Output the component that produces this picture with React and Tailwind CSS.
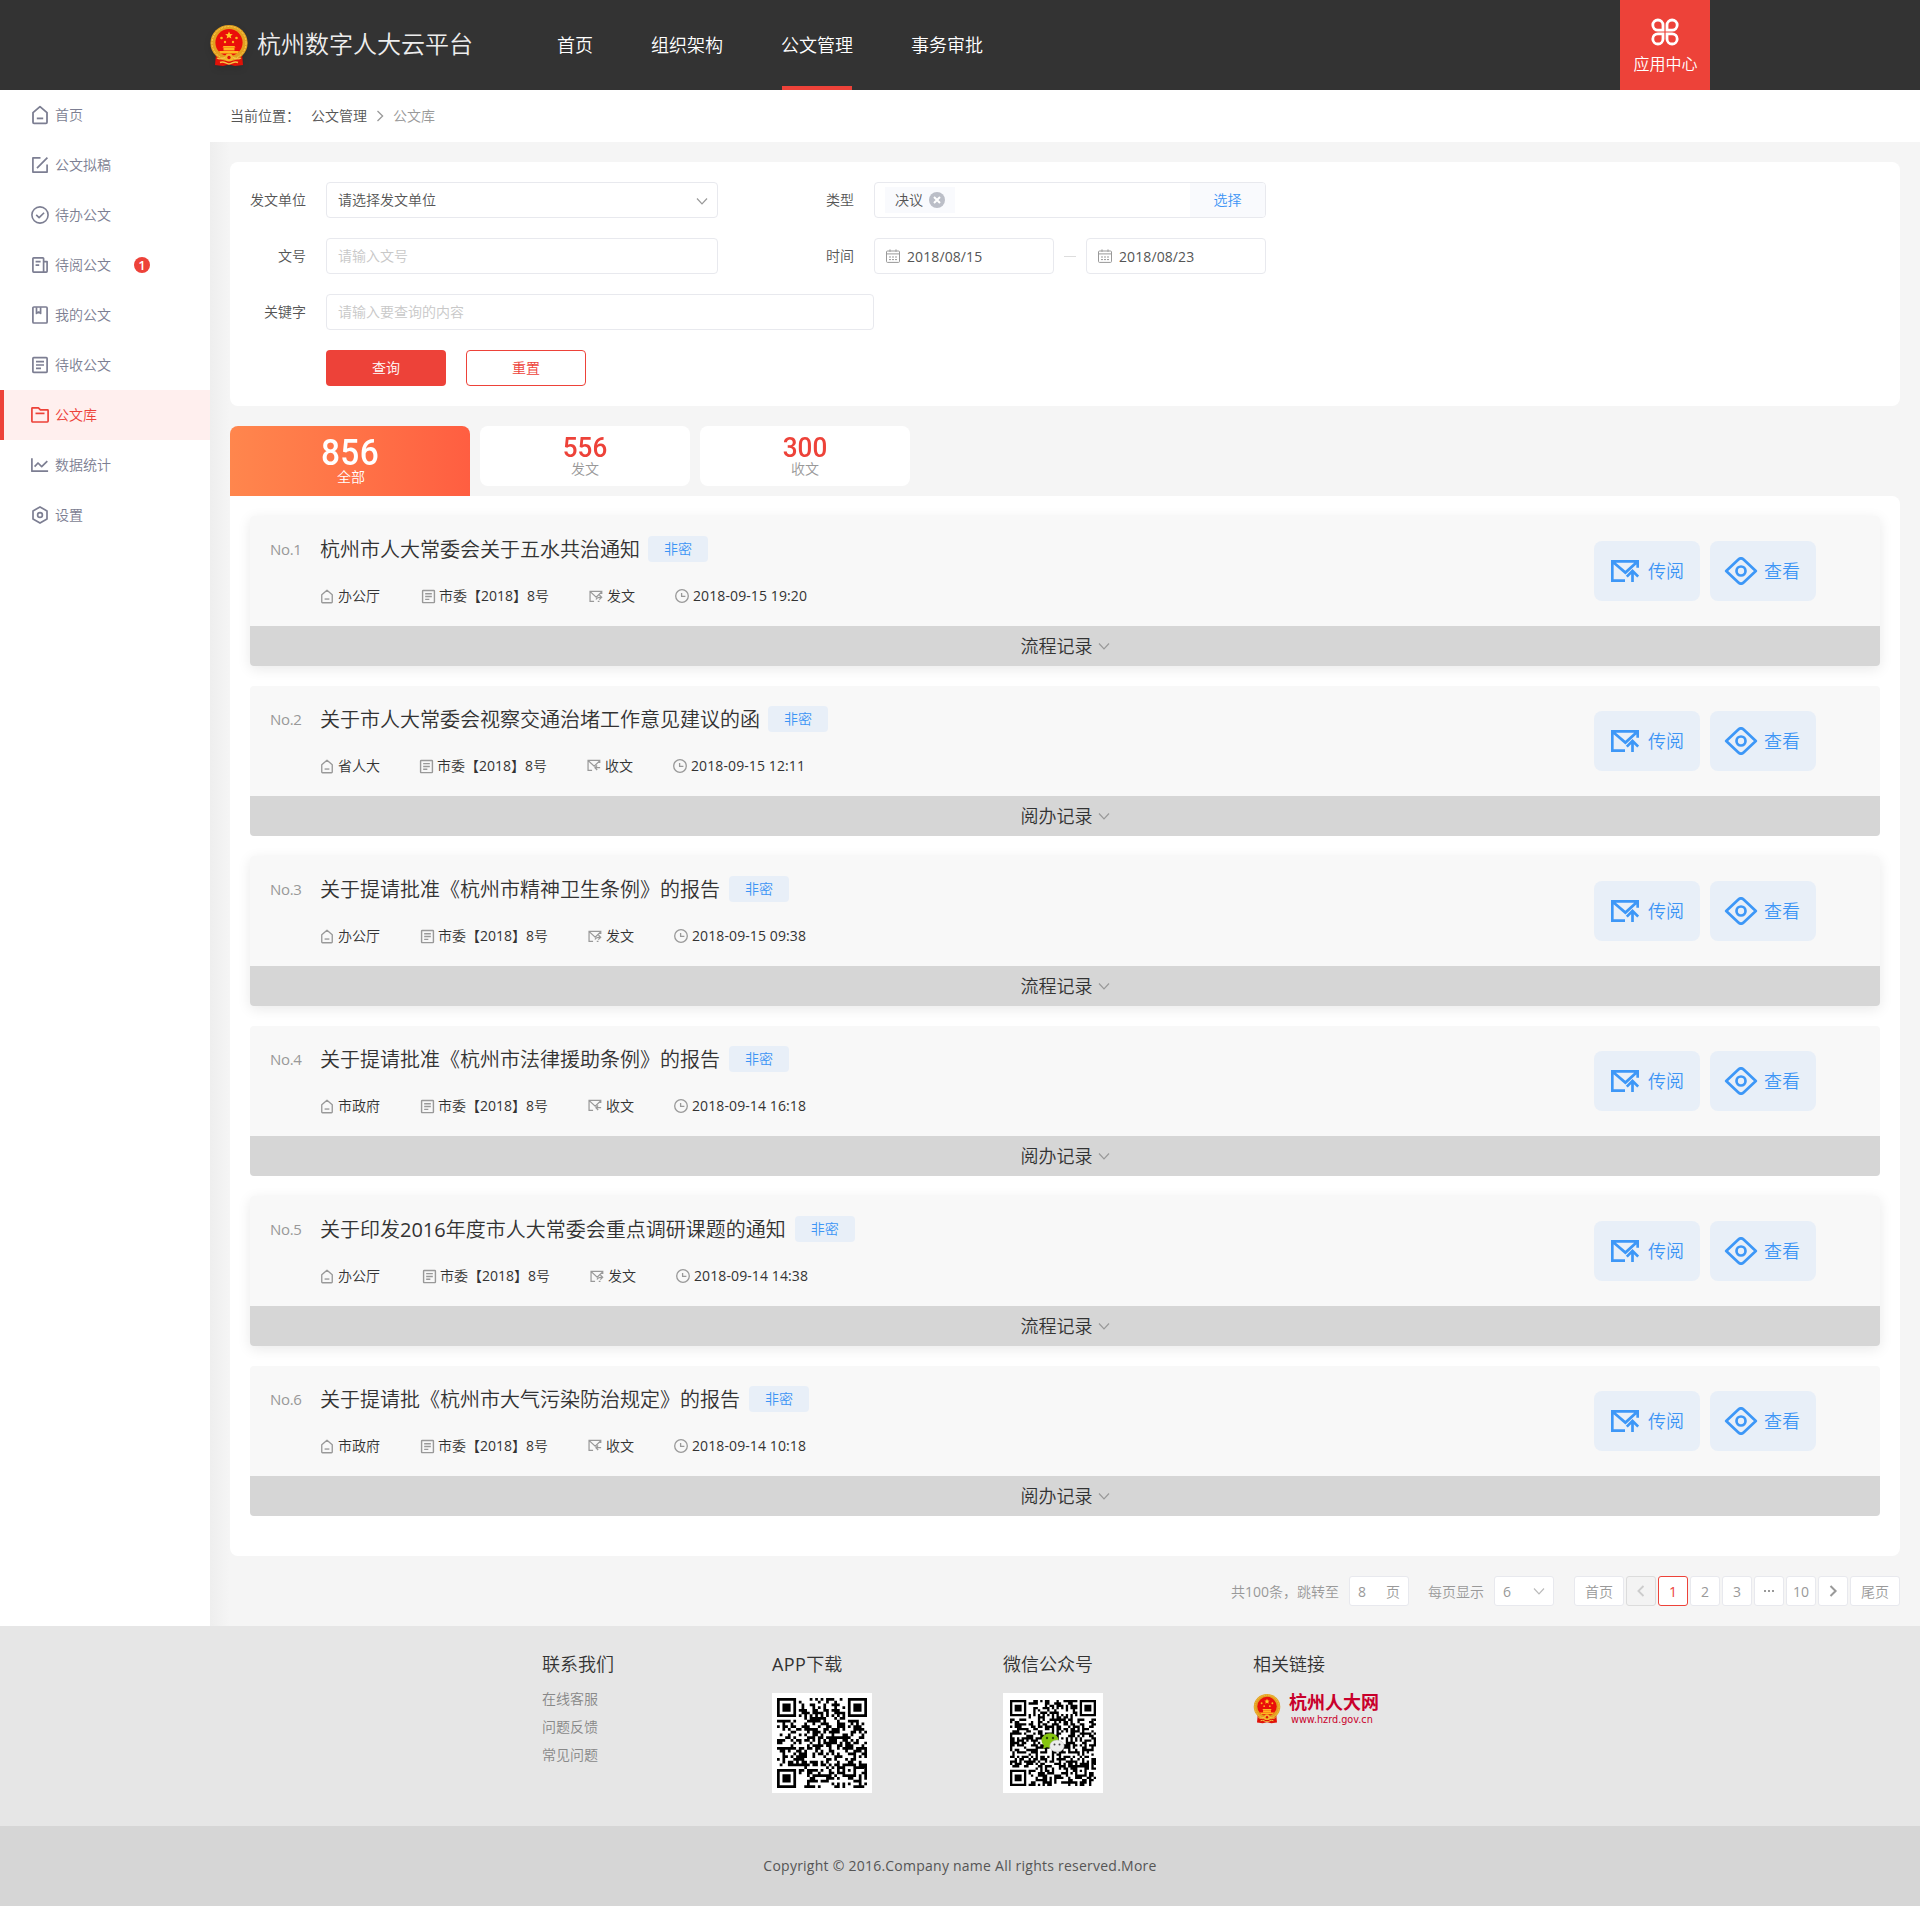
import React from "react";

const stroke = { fill: "none", stroke: "currentColor", strokeLinejoin: "round" };

function HomeIcon({ className, w = 1.8 }) {
  return (
    <svg viewBox="0 0 18 20" className={className} {...stroke} strokeWidth={w}>
      <path d="M2 7.6 9 1.6l7 6V17.300a1 1 0 0 1-1 1H3a1 1 0 0 1-1-1z" />
      <path d="M5.8 13.4h6.4" />
    </svg>
  );
}
function DraftIcon({ className }) {
  return (
    <svg viewBox="0 0 18 18" className={className} {...stroke} strokeWidth="1.7">
      <path d="M9.5 1.9H1.9v14.2h14.2V8.5M6 12.2 16.4 1.6" />
    </svg>
  );
}
function TodoIcon({ className }) {
  return (
    <svg viewBox="0 0 18 18" className={className} {...stroke} strokeWidth="1.6">
      <circle cx="9" cy="9" r="8.1" />
      <path d="m5.2 8.8 2.9 2.8 5-4.9" />
    </svg>
  );
}
function ReadIcon({ className }) {
  return (
    <svg viewBox="0 0 18 18" className={className} {...stroke} strokeWidth="1.7">
      <path d="M12.6 16.1V2.6a.8.8 0 0 0-.8-.8H2.7a.8.8 0 0 0-.8.8v12.7c0 .4.4.8.8.8h12.6c.4 0 .8-.4.8-.8V5.6h-3.3" />
      <path d="M4.6 5.7h5M4.6 9.2h3.6" />
    </svg>
  );
}
function BookIcon({ className }) {
  return (
    <svg viewBox="0 0 18 18" className={className} {...stroke} strokeWidth="1.7">
      <rect x="1.9" y="1" width="14.2" height="16" rx="1" />
      <path d="M5.5 1.2v6.2L7.6 6l2 1.4V1.2" />
    </svg>
  );
}
function ListIcon({ className, w = 1.7 }) {
  return (
    <svg viewBox="0 0 18 18" className={className} {...stroke} strokeWidth={w}>
      <rect x="1.9" y="1.7" width="14.2" height="14.6" rx="0.8" />
      <path d="M5 5.6h8M5 9h8M5 12.4h5" />
    </svg>
  );
}
function FolderIcon({ className }) {
  return (
    <svg viewBox="0 0 18 18" className={className} {...stroke} strokeWidth="1.7">
      <path d="M.9 15.1V2.4c0-.3.2-.5.5-.5h6l2 2h7.2c.3 0 .5.2.5.5v10.7c0 .5-.3.9-.8.9H1.7c-.5 0-.8-.4-.8-.9z" />
      <path d="M4.5 7.4h9" />
    </svg>
  );
}
function ChartIcon({ className }) {
  return (
    <svg viewBox="0 0 18 18" className={className} {...stroke} strokeWidth="1.7">
      <path d="M.9 2.2v13h16.2M3.6 10.6 7 7l3.7 3.6 5.6-5.4" />
    </svg>
  );
}
function GearIcon({ className }) {
  return (
    <svg viewBox="0 0 18 18" className={className} {...stroke} strokeWidth="1.7">
      <path d="m9 .9 7 4v8.2l-7 4-7-4V4.9z" />
      <circle cx="9" cy="9" r="2.4" />
    </svg>
  );
}
function MailIcon({ className, incoming }) {
  return (
    <svg viewBox="0 0 16 14" className={className} {...stroke} strokeWidth="1.4" strokeLinejoin="miter">
      <path d="M14.6 4.2V1.2H1.2v11.3h4.6M1.4 1.4l6.8 6.4 6.2-6" />
      {incoming ? <path d="M15 9.5H9.4M11.6 7 9.1 9.5l2.5 2.6" /> : <path d="M8 10.4c1-2 3-2.6 6.2-2.6M11.8 5.2l2.7 2.6-2.7 2.7M10 12.6h2" />}
    </svg>
  );
}
function ClockIcon({ className }) {
  return (
    <svg viewBox="0 0 14 14" className={className} {...stroke} strokeWidth="1.3">
      <circle cx="7" cy="7" r="6.3" />
      <path d="M6.6 4v3.4h3.8" />
    </svg>
  );
}
function SendIcon() {
  return (
    <svg viewBox="0 0 28 22" className="h-[22px] w-7 text-[#3d97f7]" fill="none" stroke="currentColor" strokeWidth="2.7">
      <path d="M14 20.7H1.3V1.3h25.4v6.4M2 2l12.4 10.6L26 2" />
      <path d="M21.5 22V11.2M15.8 16.6l5.700-5.600 5.700 5.600" />
    </svg>
  );
}
function EyeIcon() {
  return (
    <svg viewBox="0 0 34 28" className="h-7 w-[34px] text-[#3d97f7]" {...stroke} strokeWidth="2.7">
      <path d="M2.2 14 14.4 2.5c1.5-1.4 3.7-1.4 5.2 0L31.8 14 19.6 25.5c-1.5 1.4-3.700 1.4-5.200 0z" />
      <circle cx="17" cy="14" r="4.5" />
    </svg>
  );
}
function Chevron({ className, dir = "down", w = 1.2 }) {
  const d = { down: "M1 3.5 6 8.8l5-5.3", right: "M3.5 1 8.6 6l-5.1 5", left: "M8.5 1 3.4 6l5.1 5" }[dir];
  return (
    <svg viewBox="0 0 12 12" className={className} fill="none" stroke="currentColor" strokeWidth={w}>
      <path d={d} />
    </svg>
  );
}
function CalendarIcon() {
  return (
    <svg viewBox="0 0 14 14" className="h-3.5 w-3.5 text-[#999]" fill="none" stroke="currentColor">
      <rect x=".5" y="2" width="13" height="11.4" rx="1" />
      <path d="M.5 4.9h13M4 .4v2.4M10 .4v2.4" />
      <path d="M3 8h8.4M3 10.6h8.4" strokeDasharray="2 1" />
    </svg>
  );
}
function AppsIcon() {
  return (
    <svg viewBox="0 0 28 28" className="h-7 w-7 text-white" fill="none" stroke="currentColor" strokeWidth="2.8">
      <path d="M12 12.2H6.9A5.1 5.1 0 1 1 12 7.100z" />
      <path d="M16 12.2h5.1A5.1 5.1 0 1 0 16 7.100z" />
      <path d="M12 15.8H6.9A5.1 5.1 0 1 0 12 20.900z" />
      <path d="M16 15.8h5.1A5.1 5.1 0 1 1 16 20.900z" />
    </svg>
  );
}
function Emblem({ className }) {
  return (
    <svg viewBox="0 0 38 42" className={className}>
      <path d="M6 29h26l1 11-8 1-6-1.500-6 1.500-8-1z" fill="#e01208" />
      <ellipse cx="19" cy="18" rx="18.600" ry="18" fill="#e3a020" />
      <ellipse cx="19" cy="18" rx="17" ry="16.500" fill="none" stroke="#f7cf52" strokeWidth="1" strokeDasharray="2 1.200" />
      <circle cx="19" cy="17.500" r="13.600" fill="#ea0f0a" />
      <path d="m19 6.600 1.100 2.500 2.700.2-2.100 1.700.7 2.600-2.400-1.400-2.400 1.400.7-2.600-2.100-1.700 2.700-.2z" fill="#ffc928" />
      <g fill="#ffb61f">
        <circle cx="11.500" cy="13" r="1.300" />
        <circle cx="26.500" cy="13" r="1.300" />
        <circle cx="15" cy="17" r="1.200" />
        <circle cx="23" cy="17" r="1.200" />
        <path d="M13.500 21h11l1 1.500h-13zM13.500 22.800h11v2.700h-11zM9 26h20l-1.500 2.500h-17z" />
      </g>
      <circle cx="19" cy="32.500" r="4" fill="#f3b62a" />
      <circle cx="19" cy="32.500" r="1.700" fill="#e01208" />
      <path d="M7 33c3 2 5 .5 8-.5M31 33c-3 2-5 .5-8-.5M10 37.500c4-2 6 1.500 9 1.500s5-3.500 9-1.500" fill="none" stroke="#f6c445" strokeWidth="1.400" />
    </svg>
  );
}

function inFinder(x, y, n) {
  return (x < 8 && y < 8) || (x >= n - 8 && y < 8) || (x < 8 && y >= n - 8);
}
function QrCode({ n, seed, className }) {
  let s = seed;
  let d = "";
  const a = n - 7;
  for (let y = 0; y < n; y++) {
    for (let x = 0; x < n; x++) {
      s = (s * 1103515245 + 12345) % 2147483648;
      if (inFinder(x, y, n)) continue;
      const r = Math.max(Math.abs(x - a), Math.abs(y - a));
      const on = r <= 2 ? r !== 1 : x === 6 || y === 6 ? (x + y) % 2 === 0 : (s >> 16) % 100 < 52;
      if (on) d += `M${x} ${y}h1v1h-1z`;
    }
  }
  [[0, 0], [n - 7, 0], [0, n - 7]].forEach(([x, y]) => {
    d += `M${x} ${y}h7v7h-7zM${x + 1} ${y + 1}v5h5v-5zM${x + 2} ${y + 2}h3v3h-3z`;
  });
  return (
    <svg viewBox={`0 0 ${n} ${n}`} className={className}>
      <path d={d} fill="#000" />
    </svg>
  );
}
function WeChat() {
  return (
    <svg viewBox="0 0 24 20" className="absolute left-[38px] top-10 h-5 w-6">
      <ellipse cx="9" cy="7.500" rx="8.500" ry="7.300" fill="#86c610" />
      <path d="m3 12-1 4 4-2z" fill="#86c610" />
      <circle cx="6" cy="5" r="1.200" fill="#2c4a05" />
      <circle cx="12" cy="5" r="1.200" fill="#2c4a05" />
      <ellipse cx="16" cy="13" rx="7.200" ry="6" fill="#ececec" stroke="#bbb" strokeWidth=".5" />
      <circle cx="13.500" cy="11.500" r="1" fill="#444" />
      <circle cx="18.500" cy="11.500" r="1" fill="#444" />
    </svg>
  );
}

const menu = [
  ["首页", HomeIcon],
  ["公文拟稿", DraftIcon],
  ["待办公文", TodoIcon],
  ["待阅公文", ReadIcon],
  ["我的公文", BookIcon],
  ["待收公文", ListIcon],
  ["公文库", FolderIcon],
  ["数据统计", ChartIcon],
  ["设置", GearIcon],
];

const docs = [
  { title: "杭州市人大常委会关于五水共治通知", org: "办公厅", time: "2018-09-15 19:20", gap: "w-[101px]" },
  { title: "关于市人大常委会视察交通治堵工作意见建议的函", org: "省人大", time: "2018-09-15 12:11", gap: "w-[99px]" },
  { title: "关于提请批准《杭州市精神卫生条例》的报告", org: "办公厅", time: "2018-09-15 09:38", gap: "w-[100px]" },
  { title: "关于提请批准《杭州市法律援助条例》的报告", org: "市政府", time: "2018-09-14 16:18", gap: "w-[100px]" },
  { title: "关于印发2016年度市人大常委会重点调研课题的通知", org: "办公厅", time: "2018-09-14 14:38", gap: "w-[102px]" },
  { title: "关于提请批《杭州市大气污染防治规定》的报告", org: "市政府", time: "2018-09-14 10:18", gap: "w-[100px]" },
];

// Small labels sit one pixel above the optical centre of their row.
function T({ children, className = "" }) {
  return <span className={`-mt-0.5 ${className}`}>{children}</span>;
}

// Digits inside a string are set in the regular weight, the Chinese text stays lighter.
function Mixed({ text }) {
  return text.split(/(\d+)/).map((part, i) =>
    i % 2 ? (
      <span key={i} className="font-normal">
        {part}
      </span>
    ) : (
      part
    )
  );
}

function Header() {
  return (
    <header className="flex h-[90px] bg-[#333] text-white">
      <div className="ml-[210px] flex w-[347px] items-center">
        <Emblem className="mt-0.5 h-[42px] w-[38px] drop-shadow-md" />
        <span className="-mt-0.5 ml-[9px] text-[24px] leading-none text-[#eee]">杭州数字人大云平台</span>
      </div>
      <nav className="flex gap-[58px] text-[18px]">
        {["首页", "组织架构", "公文管理", "事务审批"].map((t) => (
          <a key={t} className="flex h-[90px] flex-col items-center">
            <span className="flex flex-1 items-center">{t}</span>
            {t === "公文管理" && <span className="-mt-1 h-1 w-[70px] bg-[#ed4239]" />}
          </a>
        ))}
      </nav>
      <div className="ml-auto mr-[210px] flex w-[90px] flex-col items-center bg-[#ed4239] pt-[18px]">
        <AppsIcon />
        <span className="ml-px mt-[10px] text-[16px] leading-none">应用中心</span>
      </div>
    </header>
  );
}

function Sidebar() {
  return (
    <aside className="w-[210px] shrink-0 bg-white text-[14px] text-[#7c7e92]">
      {menu.map(([label, Icon]) => (
        <a
          key={label}
          className={
            label === "公文库"
              ? "flex h-[50px] items-center border-l-4 border-[#ed4239] bg-[#ffefee] pl-[27px] text-[#ed4239]"
              : "flex h-[50px] items-center pl-[31px]"
          }
        >
          <Icon className={label === "首页" ? "h-5 w-[18px]" : "h-[18px] w-[18px]"} />
          <T className="ml-[6px]">{label}</T>
          {label === "待阅公文" && (
            <span className="ml-[23px] flex h-4 w-4 items-center justify-center rounded-full bg-[#ed4239] text-[13px] font-semibold leading-none text-white">
              1
            </span>
          )}
        </a>
      ))}
    </aside>
  );
}

const field = "flex h-9 items-center rounded border border-[#e8e9ee] bg-white";

function SearchForm() {
  return (
    <section className="mt-5 flex h-[244px] flex-col gap-5 rounded-lg bg-white py-5 text-[14px] text-[#555]">
      <div className="flex items-center">
        <T className="w-[76px] text-right">发文单位</T>
        <div className={`${field} ml-5 w-[392px] justify-between pl-[11px] pr-[9px]`}>
          <T>请选择发文单位</T>
          <Chevron className="mt-0.5 h-3 w-3 text-[#999]" />
        </div>
        <T className="w-[136px] text-right">类型</T>
        <div className={`${field} ml-5 w-[392px] justify-between overflow-hidden pl-[10px]`}>
          <span className="flex h-[26px] w-[70px] items-center gap-1.5 bg-[#f9fafd] pl-[10px]">
            <T>决议</T>
            <svg viewBox="0 0 16 16" className="h-4 w-4">
              <circle cx="8" cy="8" r="8" fill="#bbbec7" />
              <path d="m5 5 6 6M11 5l-6 6" stroke="#fff" strokeWidth="2" />
            </svg>
          </span>
          <span className="flex h-full w-[75px] items-center justify-center bg-[#f9fafd] text-[#3d95f5]">
            <T>选择</T>
          </span>
        </div>
      </div>
      <div className="flex items-center">
        <T className="w-[76px] text-right">文号</T>
        <div className={`${field} ml-5 w-[392px] pl-[11px] text-[#c8c8c8]`}>
          <T>请输入文号</T>
        </div>
        <T className="w-[136px] text-right">时间</T>
        <div className={`${field} ml-5 w-[180px] gap-[7px] pl-[11px] font-normal tracking-[0.1px]`}>
          <CalendarIcon />
          2018/08/15
        </div>
        <span className="mx-[10px] h-px w-3 bg-[#ddd]" />
        <div className={`${field} w-[180px] gap-[7px] pl-[11px] font-normal tracking-[0.1px]`}>
          <CalendarIcon />
          2018/08/23
        </div>
      </div>
      <div className="flex items-center">
        <T className="w-[76px] text-right">关键字</T>
        <div className={`${field} ml-5 w-[548px] pl-[11px] text-[#c8c8c8]`}>
          <T>请输入要查询的内容</T>
        </div>
      </div>
      <div className="ml-24 flex gap-5">
        <button className="h-9 w-[120px] rounded bg-[#ed4239] pb-0.5 text-white">查询</button>
        <button className="h-9 w-[120px] rounded border border-[#ed4239] pb-0.5 text-[#ed4239]">重置</button>
      </div>
    </section>
  );
}

function Tabs() {
  return (
    <div className="mt-5 flex h-[70px] gap-[10px] text-center text-[14px] leading-none">
      <div className="w-[240px] rounded-t-lg bg-gradient-to-r from-[#ff864d] to-[#ff5e41] pt-[9px] text-white">
        <div className="scale-x-[0.93] font-[Roboto] text-[36px] font-medium tracking-[0.4px]">856</div>
        <div className="-mt-px pl-0.5">全部</div>
      </div>
      {[["556", "发文"], ["300", "收文"]].map(([n, t]) => (
        <div key={t} className="h-[60px] w-[210px] rounded-lg bg-white pt-2 text-[#999]">
          <div className="scale-x-[0.93] font-[Roboto] text-[28px] font-medium text-[#ed4239]">{n}</div>
          <div>{t}</div>
        </div>
      ))}
    </div>
  );
}

function DocCard({ doc, index }) {
  const odd = index % 2 === 0;
  return (
    <article className={odd ? "rounded shadow-[0_3px_14px_rgba(0,0,0,0.09)]" : "rounded"}>
      <div className="flex h-[110px] items-center rounded-t bg-[#f8f8f8] pl-5 pr-16">
        <div className="flex-1 self-start pt-5">
          <div className="flex h-[26px] items-center">
            <span className="w-[50px] text-[15px] font-normal tracking-[-0.3px] text-[#999]">No.{index + 1}</span>
            <h3 className="mt-0.5 whitespace-nowrap text-[20px] text-[#333]">
              <Mixed text={doc.title} />
            </h3>
            <span
              className={
                index < 2
                  ? "ml-2 flex h-[26px] w-[60px] items-center justify-center rounded bg-[#e8eff8] text-[14px] text-[#3d95f5]"
                  : "ml-[9px] flex h-[26px] w-[60px] items-center justify-center rounded bg-[#e8eff8] text-[14px] text-[#3d95f5]"
              }
            >
              <T>非密</T>
            </span>
          </div>
          <div className="ml-[50px] mt-[23px] flex h-[22px] items-center whitespace-nowrap text-[14px] text-[#333]">
            <span className={`${doc.gap} flex items-center gap-1`}>
              <HomeIcon className="h-[15px] w-3.5 text-[#999]" w={1.8} />
              <T>{doc.org}</T>
            </span>
            <span className="flex w-[168px] items-center gap-[3px]">
              <ListIcon className="h-[15px] w-[15px] text-[#999]" w={1.7} />
              <T>
                <Mixed text="市委【2018】8号" />
              </T>
            </span>
            <span className="flex w-[86px] items-center gap-1">
              <MailIcon className={odd ? "h-[13px] w-3.5 text-[#999]" : "-mt-0.5 h-[13px] w-3.5 text-[#999]"} incoming={!odd} />
              <T>{odd ? "发文" : "收文"}</T>
            </span>
            <span className="flex items-center gap-1 font-normal tracking-[0.1px]">
              <ClockIcon className="h-3.5 w-3.5 text-[#999]" />
              <T>{doc.time}</T>
            </span>
          </div>
        </div>
        <div className="flex gap-[10px] text-[18px] text-[#3d95f5]">
          <button className="flex h-[60px] w-[106px] items-center gap-[9px] rounded-lg bg-[#e8eff8] pl-[17px]">
            <SendIcon />
            传阅
          </button>
          <button className="flex h-[60px] w-[106px] items-center gap-[6px] rounded-lg bg-[#e8eff8] pl-[14px]">
            <EyeIcon />
            查看
          </button>
        </div>
      </div>
      <div className="flex h-10 items-center justify-center gap-[5px] rounded-b bg-[#d6d6d6] text-[18px] text-[#333]">
        {odd ? "流程记录" : "阅办记录"}
        <Chevron className="h-3 w-3 text-[#999]" />
      </div>
    </article>
  );
}

const pageBox = "flex h-[30px] items-center rounded-[3px] border bg-white";

function Pagination() {
  return (
    <div className="flex h-[70px] items-center justify-end text-[14px] text-[#999]">
      <span>
        <Mixed text="共100条，跳转至" />
      </span>
      <span className={`${pageBox} ml-[10px] w-[60px] justify-between border-[#e8e9ee] px-2`}>
        <span className="font-normal">8</span>
        <span>页</span>
      </span>
      <span className="ml-[19px]">每页显示</span>
      <span className={`${pageBox} ml-[10px] w-[60px] justify-between border-[#e8e9ee] px-2`}>
        <span className="font-normal">6</span>
        <Chevron className="h-3 w-3 text-[#bbb]" />
      </span>
      <div className="ml-5 flex gap-0.5">
        <span className={`${pageBox} w-[50px] justify-center border-[#e8e9ee]`}>首页</span>
        <span className="flex h-[30px] w-[30px] items-center justify-center rounded-[3px] border border-[#dcdcdc] bg-[#f3f3f3]">
          <Chevron dir="left" w={1.8} className="h-3 w-3 text-[#ccc]" />
        </span>
        <span className={`${pageBox} w-[30px] justify-center border-[#ed4239] font-normal text-[#ed4239]`}>1</span>
        <span className={`${pageBox} w-[30px] justify-center border-[#e8e9ee] font-normal`}>2</span>
        <span className={`${pageBox} w-[30px] justify-center border-[#e8e9ee] font-normal`}>3</span>
        <span className={`${pageBox} w-[30px] justify-center gap-0.5 border-[#e8e9ee]`}>
          <i className="h-0.5 w-0.5 bg-[#999]" />
          <i className="h-0.5 w-0.5 bg-[#999]" />
          <i className="h-0.5 w-0.5 bg-[#999]" />
        </span>
        <span className={`${pageBox} w-[30px] justify-center border-[#e8e9ee] font-normal`}>10</span>
        <span className={`${pageBox} w-[30px] justify-center border-[#e8e9ee]`}>
          <Chevron dir="right" w={2} className="h-3 w-3 text-[#999]" />
        </span>
        <span className={`${pageBox} w-[50px] justify-center border-[#e8e9ee]`}>尾页</span>
      </div>
    </div>
  );
}

function Footer() {
  return (
    <footer>
      <div className="flex h-[200px] bg-[#e6e6e6] pl-[542px] pt-[25px] text-[18px] text-[#333]">
        <div className="w-[230px]">
          <h4 className="leading-[27px]">联系我们</h4>
          <ul className="mt-[7px] text-[14px] leading-7 text-[#888]">
            <li>在线客服</li>
            <li>问题反馈</li>
            <li>常见问题</li>
          </ul>
        </div>
        <div className="w-[231px]">
          <h4 className="leading-[27px]">
            <span className="font-normal tracking-[0.4px]">APP</span>下载
          </h4>
          <div className="mt-[15px] h-[100px] w-[100px] bg-white p-[5px]">
            <QrCode n={33} seed={77} className="h-[90px] w-[90px]" />
          </div>
        </div>
        <div className="w-[250px]">
          <h4 className="leading-[27px]">微信公众号</h4>
          <div className="relative mt-[15px] h-[100px] w-[100px] bg-white p-[7px]">
            <QrCode n={37} seed={4242} className="h-[86px] w-[86px]" />
            <WeChat />
          </div>
        </div>
        <div>
          <h4 className="leading-[27px]">相关链接</h4>
          <div className="mt-[14px] flex gap-2">
            <Emblem className="mt-[2px] h-[30px] w-7" />
            <div className="text-[#c9002b]">
              <div className="text-[18px] font-bold leading-5">杭州人大网</div>
              <div className="ml-[2px] font-['DejaVu_Sans'] text-[9.7px] font-normal leading-[15px]">www.hzrd.gov.cn</div>
            </div>
          </div>
        </div>
      </div>
      <div className="flex h-20 items-center justify-center bg-[#d6d6d6] pb-0.5 text-[14px] font-normal tracking-[0.24px] text-[#555]">
        Copyright © 2016.Company name All rights reserved.More
      </div>
    </footer>
  );
}

export default function App() {
  return (
    <div className="w-[1920px] bg-white font-['Open_Sans','Noto_Sans_CJK_SC',sans-serif] font-[350]">
      <Header />
      <div className="flex h-[1536px]">
        <Sidebar />
        <main className="flex-1">
          <div className="flex h-[52px] items-center bg-white pl-5 text-[14px] text-[#555]">
            <T className="w-[81px]">当前位置：</T>
            <T>公文管理</T>
            <Chevron dir="right" w={1.3} className="mx-[7px] h-3 w-3 text-[#999]" />
            <T className="text-[#999]">公文库</T>
          </div>
          <div className="flow-root h-[1484px] bg-[#f5f5f5] bg-[linear-gradient(to_right,#eeeeee_0,#f5f5f5_20px)] px-5">
            <SearchForm />
            <Tabs />
            <section className="flex h-[1060px] flex-col gap-5 rounded-b-lg rounded-tr-lg bg-white p-5">
              {docs.map((doc, i) => (
                <DocCard key={doc.title} doc={doc} index={i} />
              ))}
            </section>
            <Pagination />
          </div>
        </main>
      </div>
      <Footer />
    </div>
  );
}
